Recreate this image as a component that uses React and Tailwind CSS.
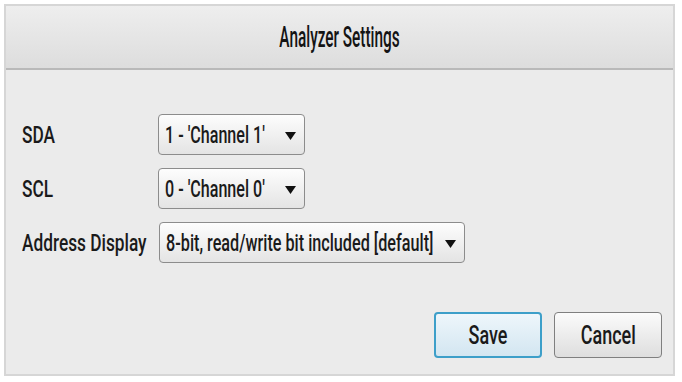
import React from "react";

const font = { fontFamily: 'Roboto, "Liberation Sans", Arial, sans-serif' };

function Select({ value, width, scale = "scale-x-[0.67]" }) {
  return (
    <div
      className={`relative h-[41px] ${width} rounded-[4px] border border-[#8c8c8c] bg-gradient-to-b from-[#fdfdfd] to-[#e4e4e4] flex items-center overflow-hidden`}
    >
      <span className={`inline-block whitespace-nowrap origin-left ${scale} pl-[9px] text-[24px] font-medium leading-none text-[#1a1a1a]`}>
        {value}
      </span>
      <svg
        className="absolute right-[8px] top-[17px]"
        width="11"
        height="8"
        viewBox="0 0 11 8"
      >
        <path d="M0 0 H11 L5.5 8 Z" fill="#111" />
      </svg>
    </div>
  );
}

function Label({ children }) {
  return (
    <span className="inline-block whitespace-nowrap origin-left scale-x-[0.72] text-[24px] font-medium leading-none text-[#1a1a1a]">
      {children}
    </span>
  );
}

export default function App() {
  return (
    <div className="w-[682px] h-[382px] bg-white pt-[4px] pl-[4px]" style={font}>
      <div className="w-[671px] h-[372px] border-2 border-[#d6d6d6] bg-[#ebebeb] flex flex-col">
        {/* header */}
        <div className="h-[64px] border-b-2 border-[#b9b9b9] bg-gradient-to-b from-[#eeeeee] to-[#dddddd] flex items-center justify-center">
          <span className="inline-block whitespace-nowrap scale-x-[0.53] text-[29px] font-medium leading-none text-[#141414]">
            Analyzer Settings
          </span>
        </div>

        {/* fields */}
        <div className="pt-[44px] pl-[16px] grid grid-cols-[136px_auto] gap-y-[13px] items-center">
          <Label>SDA</Label>
          <Select value="1 - 'Channel 1'" width="w-[147px]" />
          <Label>SCL</Label>
          <Select value="0 - 'Channel 0'" width="w-[147px]" />
          <Label>Address Display</Label>
          <div className="pl-[1px]">
            <Select value="8-bit, read/write bit included [default]" width="w-[306px]" scale="scale-x-[0.675]" />
          </div>
        </div>

        {/* buttons */}
        <div className="mt-auto pb-[16px] pr-[11px] flex justify-end gap-[12px]">
          <button className="w-[108px] h-[46px] rounded-[4px] border-2 border-[#3d9fc9] bg-gradient-to-b from-[#eef6fb] to-[#d3e6f1] flex items-center justify-center">
            <span className="inline-block scale-x-[0.72] text-[25px] font-medium leading-none text-[#1a1a1a]">Save</span>
          </button>
          <button className="w-[108px] h-[46px] rounded-[4px] border border-[#7f7f7f] bg-gradient-to-b from-[#fbfbfb] to-[#dedede] flex items-center justify-center">
            <span className="inline-block scale-x-[0.72] text-[25px] font-medium leading-none text-[#1a1a1a]">Cancel</span>
          </button>
        </div>
      </div>
    </div>
  );
}
